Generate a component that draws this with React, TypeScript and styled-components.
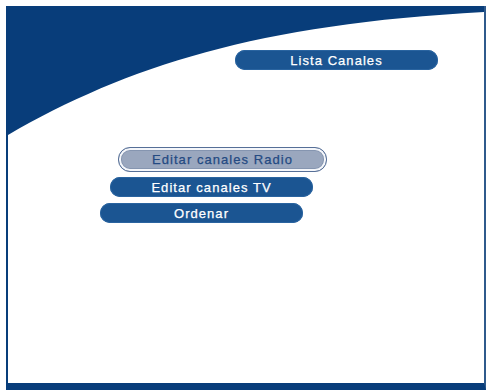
import * as React from 'react';
import styled, { createGlobalStyle, css } from 'styled-components';

const Global = createGlobalStyle`
  html, body {
    margin: 0;
    padding: 0;
    background: #ffffff;
  }
  body {
    font-family: "Liberation Sans", Arial, sans-serif;
  }
`;

const NAVY = '#083d7a';

const Screen = styled.div`
  position: relative;
  box-sizing: border-box;
  margin: 6px 0 0 6px;
  width: 480px;
  height: 384px;
  background: #ffffff;
  border-left: 2px solid ${NAVY};
  border-right: 2px solid #2f5a8c;
  border-bottom: 7px solid ${NAVY};
  overflow: hidden;
`;

const Swoosh = styled.svg`
  position: absolute;
  left: 0;
  top: 0;
  width: 478px;
  height: 140px;
  z-index: 0;
`;

const Content = styled.div`
  position: relative;
  z-index: 1;
  display: flex;
  flex-direction: column;
`;

const Header = styled.div`
  display: flex;
  padding: 44px 0 0 227px;
`;

const Menu = styled.div`
  display: flex;
  flex-direction: column;
  align-items: flex-start;
  margin-top: 77px;
  gap: 5px;
`;

interface PillProps {
  $indent?: number;
  $selected?: boolean;
  $gapTop?: number;
}

const Pill = styled.div<PillProps>`
  box-sizing: border-box;
  width: 203px;
  height: 20px;
  margin-left: ${p => p.$indent ?? 0}px;
  margin-top: ${p => p.$gapTop ?? 0}px;
  border-radius: 10px;
  background: #1b5592;
  color: #ffffff;
  font-size: 13px;
  letter-spacing: 1.05px;
  -webkit-text-stroke: 0.25px currentColor;
  display: flex;
  align-items: center;
  justify-content: center;
  line-height: 1;
  box-shadow: inset 0 0 0 1px #2a64a0;
  ${p =>
    p.$selected &&
    css`
      width: 209px;
      height: 25px;
      border-radius: 12px;
      background: #9aa7be;
      color: #244a82;
      border: 1px solid #566f97;
      box-shadow: inset 0 0 0 2px #f4f6fa, inset 0 0 0 3px #8595b0;
    `};
`;

export default function App() {
  return (
    <>
      <Global />
      <Screen>
        <Swoosh viewBox="0 0 478 140">
          <path d="M0,0 H478 V6 C250,18 120,60 0,129 Z" fill={NAVY} />
        </Swoosh>
        <Content>
          <Header>
            <Pill>Lista Canales</Pill>
          </Header>
          <Menu>
            <Pill $indent={110} $selected>
              Editar canales Radio
            </Pill>
            <Pill $indent={102}>Editar canales TV</Pill>
            <Pill $indent={92} $gapTop={1}>
              Ordenar
            </Pill>
          </Menu>
        </Content>
      </Screen>
    </>
  );
}
